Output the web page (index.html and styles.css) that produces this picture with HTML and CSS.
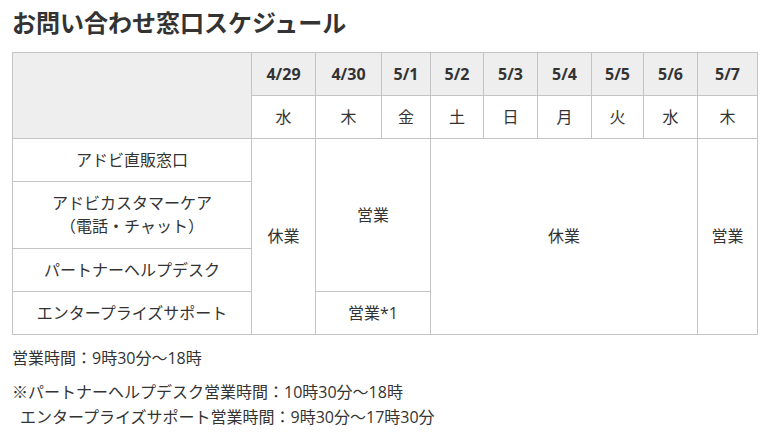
FILE: index.html
```html
<!DOCTYPE html>
<html lang="ja">
<head>
<meta charset="utf-8">
<title>お問い合わせ窓口スケジュール</title>
<link rel="stylesheet" href="styles.css">
</head>
<body>
<div class="page">
  <h1 class="title">お問い合わせ窓口スケジュール</h1>
  <table class="schedule">
    <colgroup>
      <col class="c-label">
      <col class="c-429">
      <col class="c-430">
      <col class="c-51">
      <col class="c-52">
      <col class="c-53">
      <col class="c-54">
      <col class="c-55">
      <col class="c-56">
      <col class="c-57">
    </colgroup>
    <thead>
      <tr class="row">
        <th class="corner" rowspan="2"></th>
        <th class="date">4/29</th>
        <th class="date">4/30</th>
        <th class="date">5/1</th>
        <th class="date">5/2</th>
        <th class="date">5/3</th>
        <th class="date">5/4</th>
        <th class="date">5/5</th>
        <th class="date">5/6</th>
        <th class="date">5/7</th>
      </tr>
      <tr class="row">
        <td>水</td>
        <td>木</td>
        <td>金</td>
        <td>土</td>
        <td>日</td>
        <td>月</td>
        <td>火</td>
        <td>水</td>
        <td>木</td>
      </tr>
    </thead>
    <tbody>
      <tr class="row">
        <td>アドビ直販窓口</td>
        <td rowspan="4">休業</td>
        <td colspan="2" rowspan="3">営業</td>
        <td colspan="5" rowspan="4">休業</td>
        <td rowspan="4">営業</td>
      </tr>
      <tr class="row tall">
        <td>アドビカスタマーケア<br>（電話・チャット）</td>
      </tr>
      <tr class="row">
        <td>パートナーヘルプデスク</td>
      </tr>
      <tr class="row">
        <td>エンタープライズサポート</td>
        <td colspan="2">営業*1</td>
      </tr>
    </tbody>
  </table>
  <p class="note">営業時間：9時30分～18時</p>
  <p class="note note-sub">※パートナーヘルプデスク営業時間：10時30分～18時<br><span class="indent">エンタープライズサポート営業時間：9時30分～17時30分</span></p>
</div>
</body>
</html>
```
FILE: styles.css
```css
html, body {
  margin: 0;
  padding: 0;
  background: #ffffff;
}

body {
  font-family: "Open Sans", "Noto Sans CJK JP", sans-serif;
  color: #333333;
  font-size: 16px;
}

.page {
  padding: 5px 12px 0 12px;
}

.title {
  margin: 0 0 11px 0;
  font-size: 24px;
  line-height: 36px;
  font-weight: 700;
  color: #333333;
}

.schedule {
  border-collapse: collapse;
  table-layout: fixed;
  width: 746px;
}

.c-label { width: 239px; }
.c-429 { width: 64px; }
.c-430 { width: 66px; }
.c-51 { width: 49px; }
.c-52 { width: 53px; }
.c-53 { width: 54px; }
.c-54 { width: 54px; }
.c-55 { width: 52px; }
.c-56 { width: 54px; }
.c-57 { width: 60px; }

.schedule th,
.schedule td {
  border: 1px solid #c4c4c4;
  text-align: center;
  vertical-align: middle;
  padding: 0;
  font-size: 16px;
  line-height: 23px;
  font-weight: 400;
}

.row {
  height: 43px;
}

.row.tall {
  height: 67px;
}

.schedule .corner,
.schedule .date {
  background: #eeeeee;
}

.schedule .date {
  font-weight: 700;
}

.note {
  margin: 11px 0 0 0;
  line-height: 25px;
}

.note-sub {
  margin-top: 9px;
}

.indent {
  padding-left: 8px;
}
```
